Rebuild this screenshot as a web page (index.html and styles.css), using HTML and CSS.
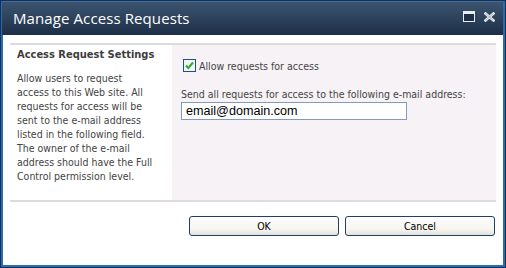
FILE: index.html
```html
<!DOCTYPE html>
<html>
<head>
<meta charset="utf-8">
<link rel="stylesheet" href="styles.css">
</head>
<body>
<div class="window">
  <div class="titlebar">
    <span class="title">Manage Access Requests</span>
    <div class="controls">
      <svg class="ico" width="12" height="11" viewBox="0 0 12 11">
        <rect x="0.5" y="0.5" width="11" height="10" fill="#1e2f45" stroke="#e8edf3"/>
        <rect x="1" y="1" width="10" height="2" fill="#e8edf3"/>
      </svg>
      <svg class="ico" width="11" height="10" viewBox="0 0 11 10">
        <path d="M1.5 1.5 L9.5 8.5 M9.5 1.5 L1.5 8.5" stroke="#e8edf3" stroke-width="2.6" stroke-linecap="square"/>
        <path d="M1.5 1.5 L9.5 8.5 M9.5 1.5 L1.5 8.5" stroke="#9aa6b4" stroke-width="0.8"/>
      </svg>
    </div>
  </div>
  <div class="content">
    <div class="sep"></div>
    <div class="section">
      <div class="desc">
        <h3 class="heading">Access Request Settings</h3>
        <p class="text">Allow users to request<br>access to this Web site. All<br>requests for access will be<br>sent to the e-mail address<br>listed in the following field.<br>The owner of the e-mail<br>address should have the Full<br>Control permission level.</p>
      </div>
      <div class="fields">
        <label class="check">
          <span class="box">
            <svg width="11" height="11" viewBox="0 0 11 11"><path d="M2 5.5 L4.3 8 L9 2.5" fill="none" stroke="#2eaa2e" stroke-width="2"/></svg>
          </span>
          <span>Allow requests for access</span>
        </label>
        <div class="label">Send all requests for access to the following e-mail address:</div>
        <div class="input">email@domain.com</div>
      </div>
    </div>
    <div class="sep"></div>
    <div class="buttons">
      <button class="btn">OK</button>
      <button class="btn">Cancel</button>
    </div>
  </div>
</div>
</body>
</html>
```
FILE: styles.css
```css
html, body {
  margin: 0;
  padding: 0;
  background: #ffffff;
}
.window {
  width: 506px;
  height: 268px;
  box-sizing: border-box;
  border: 1px solid #15314f;
  box-shadow: inset 0 0 0 2px #2a6cb4;
  background: #ffffff;
  display: flex;
  flex-direction: column;
  font-family: "DejaVu Sans Condensed", "DejaVu Sans", sans-serif;
  font-size: 10.5px;
  color: #444444;
}
.titlebar {
  height: 33px;
  flex: none;
  margin: 0 2px 0 1px;
  background: linear-gradient(#3c5470, #1d2f47);
  border-top: 1px solid #3f6fa0;
  display: flex;
  align-items: center;
  justify-content: space-between;
  padding-left: 11px;
  padding-right: 8px;
}
.title {
  font-family: "Open Sans", sans-serif;
  font-size: 15px;
  color: #ffffff;
  letter-spacing: 0.1px;
  margin-top: -1px;
}
.controls {
  display: flex;
  align-items: center;
  gap: 9px;
  margin-top: -4px;
}
.ico { display: block; }
.content {
  flex: 1;
  padding: 8px 9px 0 9px;
  display: flex;
  flex-direction: column;
}
.sep {
  height: 2px;
  background: #dedbde;
}
.section {
  height: 155px;
  display: flex;
}
.desc {
  width: 162px;
  flex: none;
  padding: 3px 0 0 7px;
  box-sizing: border-box;
  white-space: nowrap;
}
.heading {
  margin: 0;
  font-size: 11px;
  line-height: 14px;
  font-weight: bold;
  color: #3d3d3d;
}
.text {
  margin: 9px 0 0 0;
  line-height: 14px;
}
.fields {
  flex: 1;
  background: #f7f2f6;
  padding: 14px 0 0 9px;
}
.check {
  display: flex;
  align-items: center;
  gap: 3px;
  margin-left: 2px;
  height: 13px;
}
.box {
  width: 11px;
  height: 11px;
  border: 1px solid #1c5180;
  background: #f4f4f0;
  display: block;
}
.box svg { display: block; }
.label {
  margin-top: 15px;
  line-height: 14px;
}
.input {
  width: 220px;
  height: 16px;
  border: 1px solid #7f9db9;
  background: #ffffff;
  margin-top: 1px;
  padding-left: 4px;
  font-family: "Liberation Sans", Arial, sans-serif;
  font-size: 12.6px;
  line-height: 16px;
  color: #000000;
}
.buttons {
  display: flex;
  justify-content: flex-end;
  gap: 6px;
  padding-top: 14px;
  padding-right: 1px;
}
.btn {
  width: 150px;
  height: 20px;
  border: 1px solid #1f3f6e;
  border-radius: 3px;
  background: linear-gradient(#ffffff, #f5f4ef 70%, #e4e1d6);
  font-family: "DejaVu Sans Condensed", "DejaVu Sans", sans-serif;
  font-size: 10.5px;
  color: #000000;
  padding: 0;
}
```
